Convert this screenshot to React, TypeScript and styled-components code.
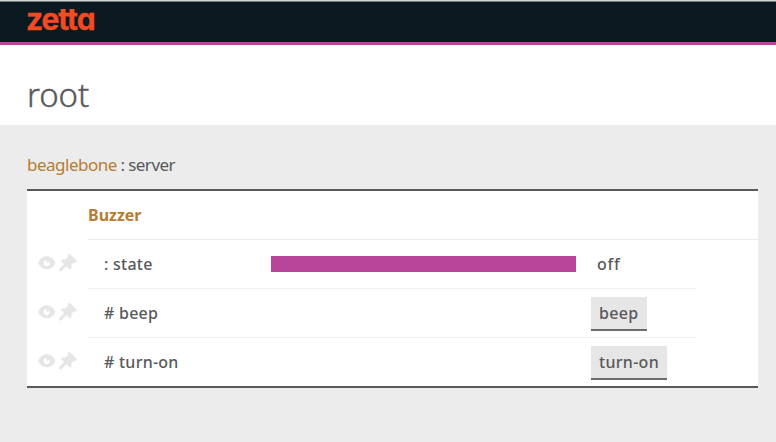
import React from 'react';
import styled, { createGlobalStyle } from 'styled-components';

const GlobalStyle = createGlobalStyle`
  * { box-sizing: border-box; }
  body {
    margin: 0;
    background: #ececec;
    color: #58595b;
    font: 17px/24px "Noto Sans", "Open Sans", sans-serif;
    overflow: hidden;
  }
`;

const Page = styled.div`
  height: 442px;
  background: #ececec;
`;

const Header = styled.header`
  height: 45px;
  padding-left: 26px;
  background: #0b1a20;
  border-top: 1px solid #d3d5d5;
  border-bottom: 3px solid #b9459b;
  box-shadow: inset 0 1px 0 #737b7e;
`;

const Logo = styled.div`
  color: #f04b23;
  font: 700 30px/36px Inter, sans-serif;
  font-feature-settings: "cv11" 1;
  letter-spacing: -1.1px;
  -webkit-text-stroke: 0.3px #f04b23;
`;

const TitleBar = styled.div`
  height: 80px;
  padding: 28px 0 0 27px;
  background: #fff;
`;

const Title = styled.h1`
  margin: 0;
  font-size: 33px;
  font-weight: 300;
  line-height: 44px;
  letter-spacing: -0.1px;
  -webkit-text-stroke: 0.4px #58595b;
`;

const Content = styled.main`
  padding: 28px 18px 0 27px;
`;

const ServerName = styled.h2`
  margin: 0 0 12px;
  font-size: 17px;
  font-weight: 400;
  line-height: 24px;
  letter-spacing: -0.5px;
  word-spacing: -0.3px;
`;

const Name = styled.a`
  color: #b67d33;
`;

const Panel = styled.section`
  height: 199px;
  background: #fff;
  border-top: 2px solid #58595b;
  border-bottom: 2px solid #58595b;
`;

const DeviceName = styled.h3`
  height: 49px;
  margin: 0 0 0 61px;
  border-bottom: 1px solid #ececec;
  color: #b67d33;
  font-size: 16px;
  font-weight: 700;
  line-height: 48px;
`;

const Row = styled.div`
  display: grid;
  grid-template-columns: 61px 183px 305px 120px;
  height: 49px;
`;

const Cell = styled.div<{ $last?: boolean }>`
  display: flex;
  align-items: center;
  border-bottom: 1px solid ${p => (p.$last ? 'transparent' : '#f0f0f0')};
`;

const Tools = styled.div`
  display: flex;
  gap: 3px;
  padding: 14px 0 0 11px;
`;

const Label = styled(Cell)`
  padding-left: 16px;
  font-size: 16px;
  font-weight: 500;
  letter-spacing: 0.25px;
`;

const Stream = styled.div`
  width: 305px;
  height: 16px;
  background: #b9459b;
`;

const Value = styled(Cell)<{ $inset: number }>`
  padding-left: ${p => p.$inset}px;
  font-size: 16px;
  font-weight: 500;
  letter-spacing: 0.7px;
`;

const Action = styled.button<{ $width: number }>`
  width: ${p => p.$width}px;
  height: 34px;
  margin-top: 2px;
  padding: 0 0 0 8px;
  background: #e6e6e6;
  border: 0;
  border-bottom: 2px solid #6b6c6e;
  color: #58595b;
  font: 500 16px/32px "Noto Sans", "Open Sans", sans-serif;
  letter-spacing: 0.3px;
  text-align: left;
`;

const EyeIcon = () => (
  <svg width="18" height="18" viewBox="0 0 18 18">
    <path fill="#e6e6e6" fillRule="evenodd" d="M.2 8.900C2 4.600 5 2.300 8.700 2.300S15.600 4.600 17.300 8.900c-1.500 4.200-4.800 6.300-8.600 6.300S2 13.100 .2 8.900ZM8.300 6a3.100 3.100 0 1 0 3.500 3.500c0-.7-.2-1.300-.6-1.900L9 9.300Z" />
  </svg>
);

const PinIcon = () => (
  <svg width="18" height="18" viewBox="0 0 18 18">
    <path fill="#e6e6e6" stroke="#e6e6e6" strokeWidth=".5" strokeLinejoin="round" d="M9.200.4c.8-.5 1.500-.2 2.100.4l5.600 5.400c.6.6.8 1.300.3 1.900-.7.700-1.600.5-2.500.3l-2.600 2.700c.4 1.700.2 3.200-.9 4.400L7.500 12.100 2.700 16.800.3 17.300.6 14.900 5.300 10 2 6.700c1.300-1.300 2.900-1.500 4.600-1.100L9.300 3C9 2 8.700 1.100 9.200.4Z" />
  </svg>
);

interface Item {
  label: string;
  action?: string;
  width?: number;
  value?: string;
}

const items: Item[] = [
  { label: ': state', value: 'off' },
  { label: '# beep', action: 'beep', width: 56 },
  { label: '# turn-on', action: 'turn-on', width: 76 },
];

export default function App() {
  return (
    <Page>
      <GlobalStyle />
      <Header><Logo>zetta</Logo></Header>
      <TitleBar><Title>root</Title></TitleBar>
      <Content>
        <ServerName><Name>beaglebone</Name> : server</ServerName>
        <Panel>
          <DeviceName>Buzzer</DeviceName>
          {items.map((item, i) => {
            const last = i === items.length - 1;
            return (
              <Row key={item.label}>
                <Tools><EyeIcon /><PinIcon /></Tools>
                <Label $last={last}>{item.label}</Label>
                <Cell $last={last}>{item.value && <Stream />}</Cell>
                <Value $last={last} $inset={item.action ? 15 : 21}>
                  {item.action ? <Action $width={item.width ?? 56}>{item.action}</Action> : item.value}
                </Value>
              </Row>
            );
          })}
        </Panel>
      </Content>
    </Page>
  );
}
